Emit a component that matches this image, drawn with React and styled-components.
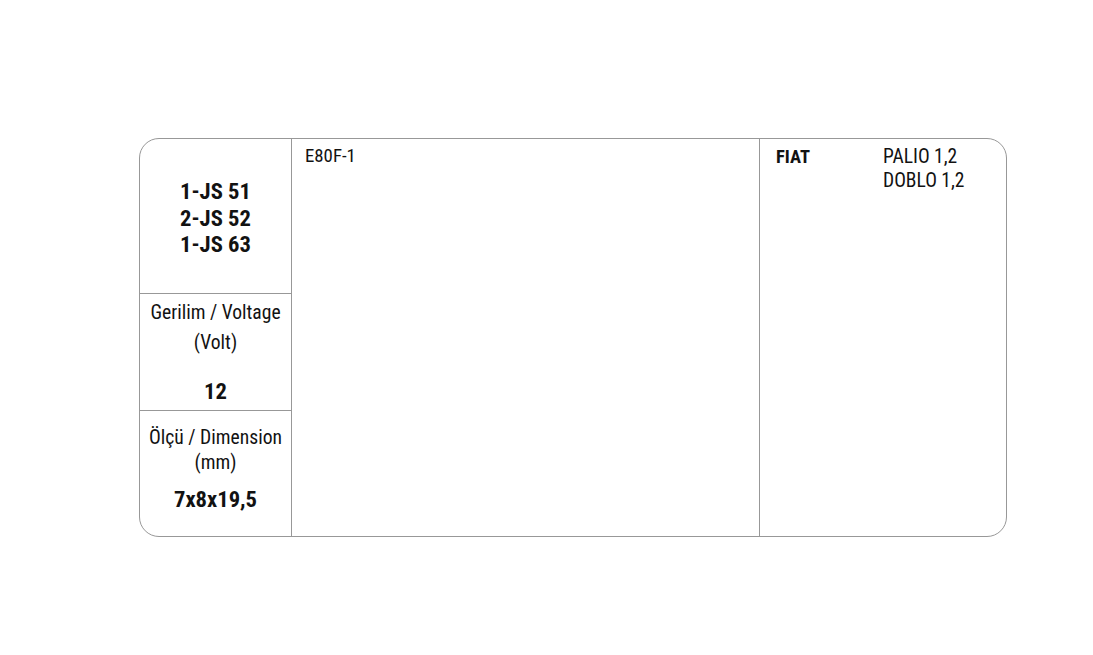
import styled, { createGlobalStyle } from "styled-components";

const GlobalStyle = createGlobalStyle`
  html, body {
    margin: 0;
    padding: 0;
    background: #ffffff;
  }
  body {
    font-family: "Roboto Condensed", "Roboto", "Liberation Sans", sans-serif;
    font-stretch: 80%;
    color: #121212;
  }
`;

const Page = styled.div`
  width: 1093px;
  height: 655px;
  padding: 138px 0 0 139px;
  box-sizing: border-box;
`;

const Sheet = styled.div`
  display: grid;
  grid-template-columns: 152px 468px 1fr;
  width: 868px;
  height: 399px;
  box-sizing: border-box;
  border: 1px solid #989898;
  border-radius: 20px;
  overflow: hidden;
`;

const SideColumn = styled.div`
  display: flex;
  flex-direction: column;
  border-right: 1px solid #989898;
`;

const SpecCell = styled.div`
  display: flex;
  flex-direction: column;
  align-items: center;
  text-align: center;
  box-sizing: border-box;
  height: ${(p) => p.$height};
  padding-top: ${(p) => p.$top}px;
  border-top: ${(p) => (p.$first ? "none" : "1px solid #989898")};
  flex: ${(p) => (p.$grow ? 1 : "none")};
`;

const Label = styled.div`
  font-size: 19.6px;
  line-height: ${(p) => p.$lh}px;
  white-space: nowrap;
`;

const Value = styled.div`
  font-size: 22.6px;
  font-weight: 700;
  line-height: ${(p) => p.$lh}px;
  margin-top: ${(p) => p.$gap || 0}px;
  white-space: nowrap;
`;

const CodeColumn = styled.div`
  padding: 5px 0 0 13px;
  font-size: 18.8px;
  line-height: 24px;
  border-right: 1px solid #989898;
`;

const CarColumn = styled.div`
  display: grid;
  grid-template-columns: 107px 1fr;
  align-content: start;
  padding: 6px 0 0 16px;
  font-size: 19.5px;
  line-height: 24px;
`;

const Make = styled.div`
  font-size: 18.5px;
  font-weight: 700;
`;

const Models = styled.div`
  display: flex;
  flex-direction: column;
`;

export default function App() {
  return (
    <>
      <GlobalStyle />
      <Page>
        <Sheet>
          <SideColumn>
            <SpecCell $first $height="154px" $top={40}>
              <Value $lh={26.5}>1-JS 51</Value>
              <Value $lh={26.5}>2-JS 52</Value>
              <Value $lh={26.5}>1-JS 63</Value>
            </SpecCell>
            <SpecCell $height="117px" $top={4}>
              <Label $lh={30}>Gerilim / Voltage</Label>
              <Label $lh={30}>(Volt)</Label>
              <Value $lh={30} $gap={19}>12</Value>
            </SpecCell>
            <SpecCell $grow $top={14}>
              <Label $lh={25}>Ölçü / Dimension</Label>
              <Label $lh={25}>(mm)</Label>
              <Value $lh={30} $gap={10}>7x8x19,5</Value>
            </SpecCell>
          </SideColumn>
          <CodeColumn>E80F-1</CodeColumn>
          <CarColumn>
            <Make>FIAT</Make>
            <Models>
              <span>PALIO 1,2</span>
              <span>DOBLO 1,2</span>
            </Models>
          </CarColumn>
        </Sheet>
      </Page>
    </>
  );
}
